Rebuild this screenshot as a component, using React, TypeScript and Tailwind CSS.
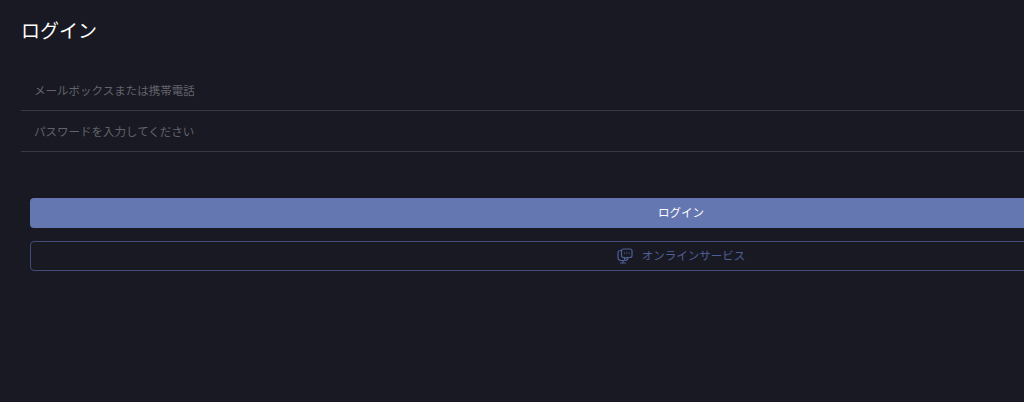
export default function App() {
  return (
    <div className="h-[402px] w-[1024px] overflow-hidden bg-[#181922] font-['Noto_Sans_CJK_JP',sans-serif]">
      <div className="w-[1362px] pl-[21px] pt-[18px]">
        {/* Title */}
        <h1 className="h-6 text-[19px] leading-6 text-white">ログイン</h1>

        {/* Fields */}
        <div className="mt-[28px]">
          <div className="flex h-[41px] items-center border-b border-[#383944] pl-[13px] pt-px text-[11.5px] text-[#62636b]">
            メールボックスまたは携帯電話
          </div>
          <div className="flex h-[41px] items-center border-b border-[#383944] pl-[13px] pt-px text-[11.5px] text-[#62636b]">
            パスワードを入力してください
          </div>
        </div>

        {/* Buttons */}
        <div className="ml-[9px] mt-[46px] flex w-[1302px] flex-col gap-[13px]">
          <button className="h-[30px] rounded bg-[#6477b0] text-[11.5px] text-white">ログイン</button>
          <button className="flex h-[30px] items-center justify-center gap-[9px] rounded border border-[#3f4d78] text-[11.5px] text-[#4f6098]">
            <svg width="16" height="16" viewBox="0 0 16 16" fill="none" stroke="currentColor" strokeWidth="1.2">
              <path d="M4.500 2.500H3C1.900 2.500 1 3.400 1 4.500v5c0 1.700 1.300 3 3 3h4c1.700 0 3-1.300 3-3" />
              <path d="M6 12.500v2.500M3 15h6" />
              <path d="M6.500 1H13c1.100 0 2 .9 2 2v4.500c0 1.100-.9 2-2 2H9.500L7.500 11V9.500h-1c-1.100 0-2-.9-2-2V3c0-1.100.9-2 2-2Z" />
              <path d="M7 5.200h.9M9.300 5.200h.9M11.600 5.200h.9" />
            </svg>
            オンラインサービス
          </button>
        </div>
      </div>
    </div>
  )
}
